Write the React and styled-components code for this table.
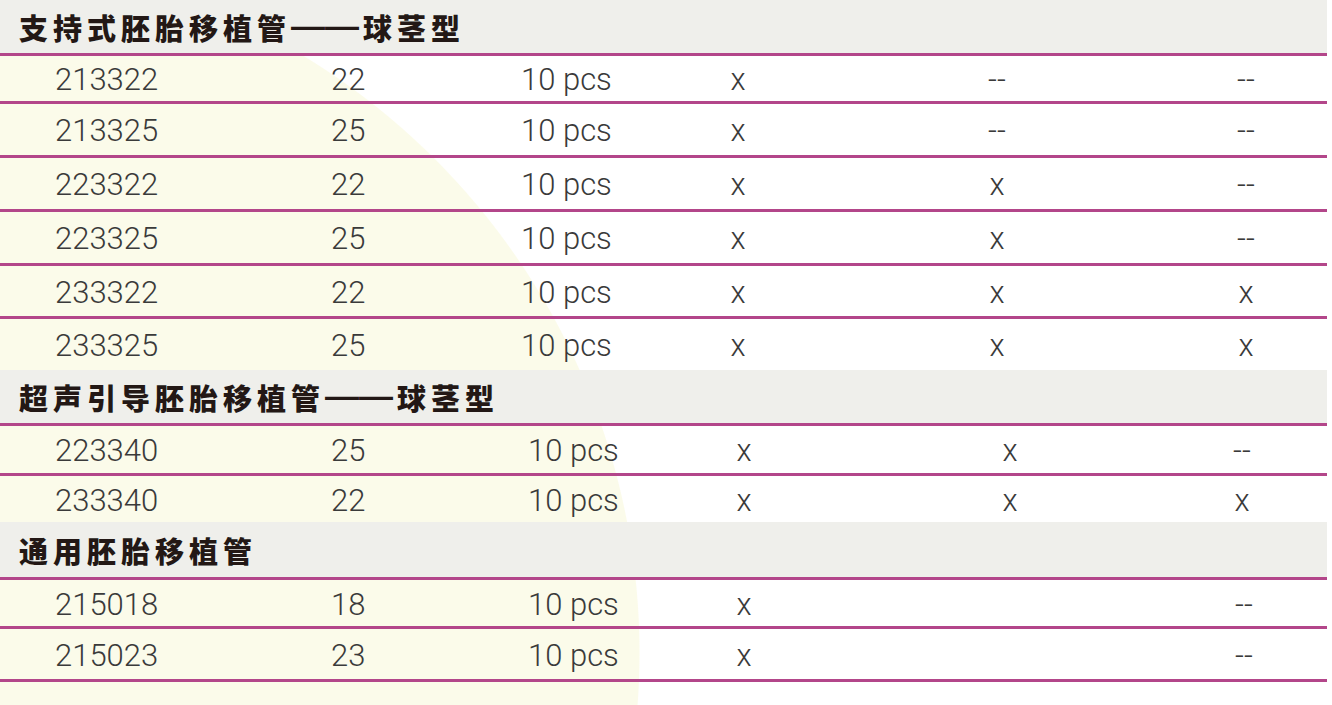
import React from "react";
import styled, { createGlobalStyle } from "styled-components";

const GlobalStyles = createGlobalStyle`
    html, body {
        margin: 0;
        padding: 0;
        background: #ffffff;
    }
`;

const Sheet = styled.div`
    width: 1327px;
    min-height: 705px;
    background: radial-gradient(circle 699px at -59px 653px, #fbfbea 698px, rgba(251, 251, 234, 0) 699px);
    font-family: Roboto, "Liberation Sans", sans-serif;
`;

const GroupTitle = styled.div`
    height: ${(p) => p.h}px;
    display: flex;
    align-items: center;
    padding-left: 19px;
    background: #efefeb;
    color: #231815;
    font-family: "Noto Sans CJK SC", "Noto Sans", sans-serif;
    font-weight: 900;
    font-size: 29px;
    letter-spacing: 5px;
    box-sizing: border-box;
`;

const Dash = styled.span`
    font-family: "Liberation Sans", sans-serif;
    font-weight: 700;
    font-size: 34px;
    letter-spacing: 0;
    margin: 0 4px 2px 0;
    white-space: nowrap;
`;

const Row = styled.div`
    height: ${(p) => p.h}px;
    box-sizing: border-box;
    display: grid;
    grid-template-columns: ${(p) => p.cols};
    align-items: center;
    padding: 2px 0 0 55px;
    border-top: 3px solid #b3468a;
    border-bottom: ${(p) => (p.closed ? "3px solid #b3468a" : "none")};
    color: #3a3a3a;
    font-weight: 300;
    font-size: 31px;
`;

const Cell = styled.span`
    text-align: ${(p) => (p.center ? "center" : "left")};
    white-space: nowrap;
`;

const COLS_A = "276px 190px 150px 134px 384px 114px";
const COLS_B = "276px 197px 150px 132px 400px 64px";
const COLS_C = "276px 197px 150px 132px 400px 68px";

const groups = [
    {
        title: ["支持式胚胎移植管", "——", "球茎型"],
        titleH: 53,
        cols: COLS_A,
        rows: [
            { h: 48, v: ["213322", "22", "10 pcs", "x", "--", "--"] },
            { h: 54, v: ["213325", "25", "10 pcs", "x", "--", "--"] },
            { h: 54, v: ["223322", "22", "10 pcs", "x", "x", "--"] },
            { h: 54, v: ["223325", "25", "10 pcs", "x", "x", "--"] },
            { h: 53, v: ["233322", "22", "10 pcs", "x", "x", "x"] },
            { h: 54, v: ["233325", "25", "10 pcs", "x", "x", "x"] },
        ],
    },
    {
        title: ["超声引导胚胎移植管", "——", "球茎型"],
        titleH: 53,
        cols: COLS_B,
        rows: [
            { h: 50, v: ["223340", "25", "10 pcs", "x", "x", "--"] },
            { h: 49, v: ["233340", "22", "10 pcs", "x", "x", "x"] },
        ],
    },
    {
        title: ["通用胚胎移植管"],
        titleH: 55,
        cols: COLS_C,
        closed: true,
        rows: [
            { h: 49, v: ["215018", "18", "10 pcs", "x", "", "--"] },
            { h: 56, v: ["215023", "23", "10 pcs", "x", "", "--"] },
        ],
    },
];

const App = () => {
    return (
        <Sheet>
            <GlobalStyles />
            {groups.map((g, gi) => (
                <section key={gi}>
                    <GroupTitle h={g.titleH}>
                        {g.title[0]}
                        {g.title[1] && <Dash>{g.title[1]}</Dash>}
                        {g.title[2]}
                    </GroupTitle>
                    {g.rows.map((r, ri) => (
                        <Row
                            key={ri}
                            h={r.h}
                            cols={g.cols}
                            closed={g.closed && ri === g.rows.length - 1}
                        >
                            {r.v.map((t, ci) => (
                                <Cell key={ci} center={ci > 2}>{t}</Cell>
                            ))}
                        </Row>
                    ))}
                </section>
            ))}
        </Sheet>
    );
};

export default App;
